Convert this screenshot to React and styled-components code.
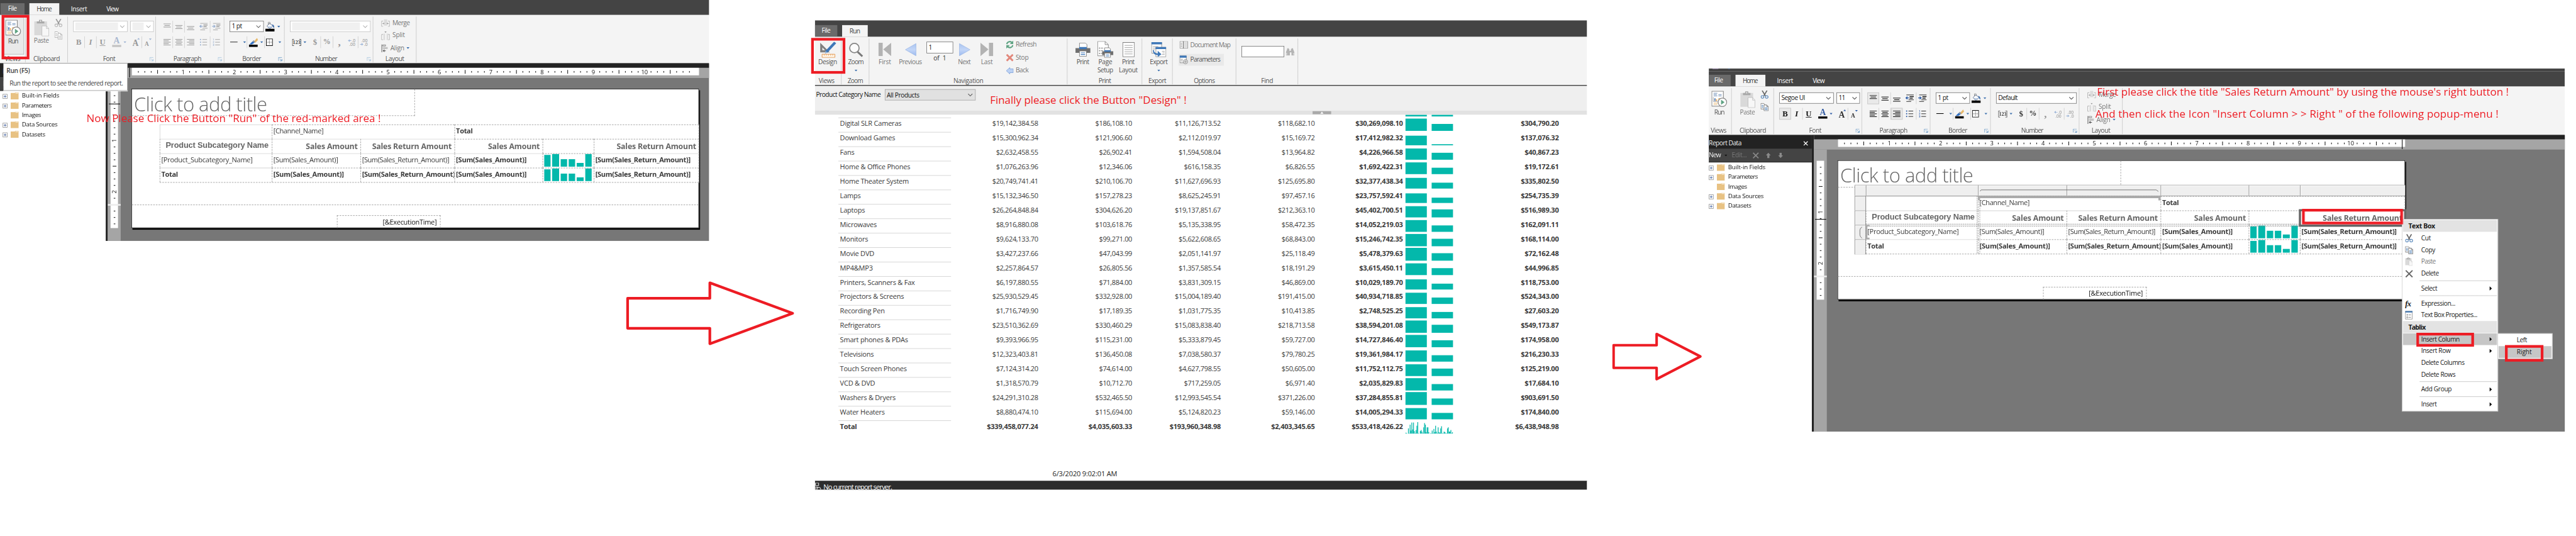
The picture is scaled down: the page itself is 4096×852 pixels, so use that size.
import React, { useLayoutEffect, useRef } from "react";
import styled, { createGlobalStyle, css } from "styled-components";

const SCALE = 4096 / 4824;
const RED = "#ed1c24";
const TEAL = "#03b8ab";

const Global = createGlobalStyle`
  body { margin: 0; background: #fff; overflow: hidden; font-family: "Open Sans", "Noto Sans", sans-serif; }
  * { box-sizing: border-box; }
  svg { display: block; flex: none; }
`;

/* ---------- text ---------- */
const Text = styled.span`
  display: inline-block;
  white-space: pre;
  line-height: 1.2;
  font-size: ${(p) => p.$size || 12}px;
  font-weight: ${(p) => p.$weight || 400};
  color: ${(p) => p.$color || "inherit"};
  font-family: ${(p) => p.$family || "inherit"};
`;

/* Text tracked so that it fills a given width. */
function Fit({ w, size, weight, color, family, children }) {
  const ref = useRef(null);
  useLayoutEffect(() => {
    const el = ref.current;
    el.style.letterSpacing = "0px";
    const natural = el.getBoundingClientRect().width / SCALE;
    const n = Math.max(1, el.textContent.length);
    const spacing = (w - natural) / n;
    el.style.letterSpacing = spacing + "px";
    el.style.marginRight = -spacing + "px";
  }, [w, children]);
  return (
    <Text ref={ref} $size={size} $weight={weight} $color={color} $family={family}>
      {children}
    </Text>
  );
}

/* ---------- board ---------- */
const Viewport = styled.div`
  width: 4096px;
  height: 852px;
  overflow: hidden;
  background: #fff;
`;
const Board = styled.main`
  width: 4824px;
  height: 1004px;
  display: flex;
  align-items: flex-start;
  transform: scale(${SCALE});
  transform-origin: 0 0;
`;
const FirstStep = styled.section`
  width: 1490px;
  display: flex;
  flex-direction: column;
`;
const SecondStep = styled.section`
  width: 1446px;
  margin: 38px 0 0 36px;
`;
const ThirdStep = styled.section`
  margin: 128px 0 0 13px;
`;
const FirstArrow = styled.svg`
  margin: 73px 0 0 1170px;
`;
const SecondArrow = styled.svg`
  margin: 620px 0 0 47px;
`;

const Note = styled.div`
  position: absolute;
  z-index: 5;
  left: ${(p) => p.$x}px;
  top: ${(p) => p.$y}px;
  display: flex;
  color: ${RED};
`;
const Mark = styled.div`
  position: absolute;
  z-index: 6;
  left: ${(p) => p.$x}px;
  top: ${(p) => p.$y}px;
  width: ${(p) => p.$w}px;
  height: ${(p) => p.$h}px;
  border: 5px solid ${RED};
`;

/* ---------- window frame ---------- */
const Frame = styled.div`
  position: relative;
  width: ${(p) => p.$w}px;
  height: ${(p) => p.$h}px;
`;
const Clip = styled.div`
  width: 100%;
  height: 100%;
  overflow: hidden;
  display: flex;
  flex-direction: column;
`;
const Shifted = styled.div`
  flex: 1;
  min-height: 0;
  display: flex;
  flex-direction: column;
  margin-left: ${(p) => -(p.$x || 0)}px;
`;
const TitleStrip = styled.div`
  height: 6px;
  background: #444;
  display: flex;
  padding-left: 7px;
  gap: 18px;
`;
const TitleSpeck = styled.i`
  width: ${(p) => p.$w}px;
  height: 1px;
  background: ${(p) => p.$c};
`;
const TabBar = styled.div`
  height: ${(p) => p.$h || 28}px;
  flex: none;
  background: #444;
  display: flex;
  align-items: flex-end;
  padding-left: ${(p) => p.$pad || 0}px;
  color: #fff;
`;
const Tab = styled.div`
  width: ${(p) => p.$w}px;
  height: 22px;
  margin-left: ${(p) => p.$gap || 0}px;
  display: flex;
  align-items: center;
  justify-content: center;
  ${(p) => p.$kind === "file" && css`background: #6a6a6a; height: 21px; margin-bottom: 1px;`}
  ${(p) => p.$kind === "on" && css`background: #f4f4f4; color: #444;`}
`;
const Ribbon = styled.div`
  height: 90px;
  flex: none;
  background: #f4f4f4;
  display: flex;
  color: #555;
`;
const Group = styled.div`
  width: ${(p) => p.$w}px;
  flex: none;
  height: 90px;
  display: flex;
  flex-direction: column;
  background: linear-gradient(#c8c8c8, #c8c8c8) right 3px / 1px 86px no-repeat;
  background-position: right 0 top 3px;
`;
const GroupBody = styled.div`
  height: 74px;
  flex: none;
  display: flex;
  flex-direction: ${(p) => (p.$col ? "column" : "row")};
  padding: ${(p) => p.$pad || "11px 0 0 10px"};
  gap: ${(p) => p.$gap || 0}px;
`;
const GroupLabel = styled.div`
  height: 16px;
  display: flex;
  align-items: center;
  justify-content: center;
  position: relative;
  color: #555;
  padding-right: ${(p) => p.$shift || 0}px;
`;
const Launcher = styled.svg`
  position: absolute;
  right: 4px;
  top: 5px;
`;
const Row = styled.div`
  display: flex;
  align-items: center;
  height: ${(p) => p.$h || 22}px;
  gap: ${(p) => p.$gap || 0}px;
`;
const Cell = styled.div`
  width: ${(p) => p.$w}px;
  height: 22px;
  flex: none;
  display: flex;
  align-items: center;
  justify-content: center;
  gap: 4px;
  ${(p) => p.$sep && css`border-right: 1px solid #cfcfcf;`}
  ${(p) => p.$on && css`background: #e9e9e9; border: 1px solid #c4c4c4;`}
`;
const Combo = styled.div`
  width: ${(p) => p.$w}px;
  height: 21px;
  background: #fff;
  border: 1px solid ${(p) => (p.$off ? "#c6c6c6" : "#7a7a7a")};
  display: flex;
  align-items: center;
  justify-content: space-between;
  padding: 0 4px 0 3px;
  color: #111;
`;
const Blank = styled.i`
  width: ${(p) => p.$w}px;
  height: 15px;
  background: #f0f0f0;
`;
const BigButton = styled.div`
  width: ${(p) => p.$w}px;
  margin-left: ${(p) => p.$ml || 0}px;
  flex: none;
  display: flex;
  flex-direction: column;
  align-items: center;
  ${(p) => p.$hot && css`background: #e9e9e9; border: 1px solid #bdbdbd; border-top-color: #ddd;`}
`;
const IconBox = styled.div`
  height: ${(p) => p.$h || 31}px;
  display: flex;
  align-items: center;
`;
const TextLine = styled.div`
  height: ${(p) => p.$h || 15}px;
  display: flex;
  align-items: center;
  justify-content: ${(p) => (p.$left ? "flex-start" : "center")};
  gap: ${(p) => p.$gap || 0}px;
`;
const Serif = styled.span`
  font-family: "Liberation Serif", serif;
  font-weight: 700;
  font-size: ${(p) => p.$s || 14}px;
  line-height: 1;
  font-style: ${(p) => (p.$i ? "italic" : "normal")};
  text-decoration: ${(p) => (p.$u ? "underline" : "none")};
  color: ${(p) => p.$c};
`;
const FontColor = styled.span`
  width: 17px;
  height: 18px;
  border-bottom: 4px solid ${(p) => p.$bar};
  display: flex;
  align-items: flex-end;
  justify-content: center;
`;

/* ---------- icons ---------- */
const Chevron = ({ c = "#555" }) => (
  <svg width="10" height="6" viewBox="0 0 10 6"><path d="M1 .7l4 4 4-4" fill="none" stroke={c} strokeWidth="1.2" /></svg>
);
const Drop = ({ c = "#3b6fae" }) => (
  <svg width="6" height="4" viewBox="0 0 6 4"><path d="M.3.3h5.4L3 3.6z" fill={c} /></svg>
);
const LaunchIcon = ({ c }) => (
  <Launcher width="8" height="8" viewBox="0 0 8 8"><path d="M.5 7V.5H7M3 3l3.5 3.5M7 3.5V7H3.5" fill="none" stroke={c} /></Launcher>
);
const Lines = ({ w = 14, h = 12, rows, c }) => (
  <svg width={w} height={h} viewBox={`0 0 ${w} ${h}`}>
    {rows.map(([x, y, len], i) => <rect key={i} x={x} y={y} width={len} height="1.2" fill={c} />)}
  </svg>
);
const LEFT = [[0, 0, 14], [0, 2.7, 10], [0, 5.4, 14], [0, 8.1, 10], [0, 10.8, 14]];
const CENTER = [[0, 0, 14], [2, 2.7, 10], [0, 5.4, 14], [2, 8.1, 10], [0, 10.8, 14]];
const RIGHT = [[0, 0, 14], [4, 2.7, 10], [0, 5.4, 14], [4, 8.1, 10], [0, 10.8, 14]];
const tri = (y) => [[0, y, 14], [2, y + 3, 10], [0, y + 6, 14]];

const Indent = ({ c, blue, right }) => (
  <svg width="16" height="14" viewBox="0 0 16 14">
    <g fill={c}><rect x="2" y="0" width="14" height="1.2" /><rect x="8" y="3" width="8" height="1.6" /><rect x="8" y="6" width="6" height="1.6" /><rect x="6" y="9.4" width="10" height="1" /><rect x="2" y="12.4" width="9" height="1" /></g>
    <path d={right ? "M0 5.5h3V3l4 3.3-4 3.3V7H0z" : "M7 5.5H4V3L0 6.3l4 3.3V7h3z"} fill={blue} />
  </svg>
);
const Bullets = ({ c, blue, num }) => (
  <svg width="14" height="14" viewBox="0 0 14 14">
    <g fill={c}><rect x="5" y="1.5" width="9" height="1" /><rect x="5" y="6.5" width="9" height="1" /><rect x="5" y="11.5" width="9" height="1" /></g>
    {num
      ? <path d="M1 .5h1v3M.8 5.5h1.7v1L1 8h1.8M.8 10.5h1.7v3H.8M1 12h1.5" fill="none" stroke={blue} strokeWidth=".8" />
      : <g fill={blue}><circle cx="1.5" cy="2" r="1.3" /><circle cx="1.5" cy="7" r="1.3" /><circle cx="1.5" cy="12" r="1.3" /></g>}
  </svg>
);
const RunIcon = () => (
  <svg width="30" height="32" viewBox="0 0 30 32">
    <path d="M.7.7h21.6v28H.7z" fill="#fff" stroke="#7f7f7f" strokeWidth="1.2" />
    <path d="M4 4.5h7M4 7h6M13 7h6M4 9.500h7M13 9.500h6" stroke="#5b7fae" strokeWidth="1" />
    <path d="M3.500 12v8h8" fill="none" stroke="#999" /><path d="M5.500 14h2v5h-2z" fill="#3f6fae" /><path d="M8.500 16h2v3h-2z" fill="#e79a3c" />
    <path d="M13 14a4.500 4.500 0 0 1 5 2l-5 3z" fill="#e9b265" /><path d="M4 23h9M4 25.500h7" stroke="#e9b265" />
    <circle cx="20.500" cy="21.500" r="8" fill="#fff" stroke="#8a8a8a" strokeWidth="1.500" />
    <path d="M18 16.800l6.500 4.700-6.500 4.700z" fill="#5fa383" />
  </svg>
);
const PasteIcon = ({ s = 1 }) => (
  <svg width={28 * s} height={31 * s} viewBox="0 0 28 31">
    <path d="M0 3h24v26H0z" fill="#d9d9d9" /><path d="M5 7V3h4V1.500a3 3 0 0 1 6 0V3h4v4z" fill="#a9a9a9" /><circle cx="12" cy="2.600" r="1.200" fill="#f4f4f4" />
    <path d="M14.500 11.500H23l4.500 5v14h-13z" fill="#f7f7f7" stroke="#bdbdbd" /><path d="M23 11.500v5h4.500" fill="none" stroke="#bdbdbd" />
  </svg>
);
const CutIcon = ({ on }) => (
  <svg width="15" height="16" viewBox="0 0 15 16">
    <path d="M3 .5l6 10M12 .5L6 10.500" stroke={on ? "#666" : "#9b9b9b"} strokeWidth="2" />
    <circle cx="3.400" cy="12.500" r="2.600" fill="none" stroke={on ? "#4a7db5" : "#b5b5b5"} strokeWidth="1.200" /><circle cx="11.400" cy="12.500" r="2.600" fill="none" stroke={on ? "#4a7db5" : "#b5b5b5"} strokeWidth="1.200" />
  </svg>
);
const CopyIcon = ({ on }) => {
  const g = on ? "#6d6d6d" : "#aaa";
  const b = on ? "#4a7db5" : "#b9b9b9";
  return (
    <svg width="15" height="15" viewBox="0 0 15 15">
      <path d="M.5.5h5l3 2.500v8h-8z" fill="#fff" stroke={g} /><path d="M2 4h3M2 6h3M2 8h3" stroke={b} />
      <path d="M6.500 3.500h5l3 3v8h-8z" fill="#fff" stroke={g} /><path d="M11.500 3.500v3h3" fill="none" stroke={g} /><path d="M8 8.500h5M8 10.500h5M8 12.500h5" stroke={b} />
    </svg>
  );
};
const BucketIcon = () => (
  <svg width="18" height="18" viewBox="0 0 18 18">
    <path d="M3 8l5-6 6 6-6 5z" fill="#fff" stroke="#5a6f96" strokeWidth="1.100" /><path d="M5.500 5V1.500A1.500 1.500 0 0 1 8.500 1v4" fill="none" stroke="#777" />
    <path d="M12 5c3-.5 5 2 4.500 6.500-1.500-1-2.500-2.500-2.800-4z" fill="#3f6fae" /><path d="M4 8.500h9L8 12.500z" fill="#b9cbe4" /><path d="M0 13h17v5H0z" fill="#000" />
  </svg>
);
const PenIcon = () => (
  <svg width="17" height="17" viewBox="0 0 17 17">
    <path d="M15.500 0L17 4l-5 5-3-2z" fill="#e7b869" /><path d="M9 4l3 4-3 2-3-2z" fill="#8a97a8" /><path d="M7 6.500l3 3-4 2.500H1z" fill="#2f6fc4" /><path d="M0 12.500h16.500V17H0z" fill="#000" />
  </svg>
);
const BorderIcon = () => (
  <svg width="13" height="14" viewBox="0 0 13 14"><path d="M.7.7h11.600v12.600H.7z" fill="#fff" stroke="#111" strokeWidth="1.200" /><path d="M6.500 2v10M2 7h9" stroke="#555" strokeDasharray="1.500 1" /></svg>
);
const NumberIcon = () => (
  <svg width="17" height="13" viewBox="0 0 17 13"><path d="M3.500.6H.6v11.800h2.900M13.500.6h2.900v11.800h-2.900" fill="none" stroke="#555" strokeWidth="1.200" /><text x="8.500" y="10" textAnchor="middle" fontFamily="Liberation Serif, serif" fontWeight="700" fontSize="9.500" fill="#444">123</text></svg>
);
const DecimalIcon = ({ up }) => (
  <svg width="16" height="15" viewBox="0 0 16 15">
    <g fontFamily="Open Sans, sans-serif" fontSize="8" fill="#888"><text x={up ? 8 : 3} y="7">{up ? ".0" : ".00"}</text><text x={up ? 3 : 8} y="14">{up ? ".00" : ".0"}</text></g>
    <path d={up ? "M7 3.500H4V1.500L.5 4 4 6.500v-2h3z" : "M0 10.500h3v-2L6.500 11 3 13.500v-2H0z"} fill="#9db5d8" />
  </svg>
);
const MergeIcon = () => (
  <svg width="16" height="14" viewBox="0 0 16 14"><path d="M3.500 3.500h-3v10h3M12.500 3.500h3v10h-3" fill="none" stroke="#aaa" /><path d="M5 0h6v12H5z" fill="#dcdcdc" /><path d="M2 8h3M14 8h-3" stroke="#999" /><path d="M4 6l2 2-2 2zM12 6l-2 2 2 2z" fill="#999" /></svg>
);
const SplitIcon = () => (
  <svg width="16" height="16" viewBox="0 0 16 16"><path d="M3.500 5.500h-3v10h3M12.500 5.500h3v10h-3" fill="none" stroke="#aaa" /><path d="M4 4h3v12H4zM10 4h3v12h-3z" fill="#dcdcdc" /><path d="M6 0h4L8 2.500z" fill="#999" /></svg>
);
const AlignIcon = () => (
  <svg width="13" height="15" viewBox="0 0 13 15"><path d="M1 0v15" stroke="#555" strokeWidth="1.200" /><path d="M3 .8h5v2.400H3z" fill="none" stroke="#777" /><path d="M3 5h9v4H3z" fill="#c4c4c4" /><path d="M8.500 12H4M6 10l-2.400 2L6 14" fill="none" stroke="#555" strokeWidth="1.200" /></svg>
);
const XIcon = ({ s = 12, c = "#666", w = 2 }) => (
  <svg width={s} height={s} viewBox="0 0 12 12"><path d="M1 1l10 10M11 1L1 11" stroke={c} strokeWidth={w} /></svg>
);

/* ---------- designer window ---------- */
const Workspace = styled.div`
  flex: 1;
  min-height: 0;
  display: flex;
  border-top: 1px solid #4a4a4a;
`;
const Side = styled.aside`
  width: 198px;
  flex: none;
  background: #fff;
  color: #111;
`;
const SideHead = styled.div`
  height: 26px;
  background: #222;
  color: #eee;
  display: flex;
  align-items: center;
  justify-content: space-between;
  padding: 5px 7px 0 5px;
`;
const SideTools = styled.div`
  height: 25px;
  background: #444;
  border-bottom: 1px solid #222;
  display: flex;
  align-items: center;
  padding-left: 5px;
  color: #eee;
`;
const Gap = styled.i`
  width: ${(p) => p.$w}px;
  flex: none;
`;
const Tree = styled.ul`
  list-style: none;
  margin: 0;
  padding: 0 0 0 5px;
`;
const TreeItem = styled.li`
  height: 18px;
  display: flex;
  align-items: center;
  gap: 6px;
`;
const Plus = styled.i`
  width: 9px;
  height: 9px;
  margin-top: 3px;
  border: 1px solid ${(p) => (p.$none ? "transparent" : "#999")};
  background: ${(p) => (p.$none ? "none" : "linear-gradient(#3a5a9a,#3a5a9a) center / 5px 1px no-repeat, linear-gradient(#3a5a9a,#3a5a9a) center / 1px 5px no-repeat")};
`;
const Folder = () => (
  <svg width="15" height="13" viewBox="0 0 15 13"><path d="M0 1h8V0h7v13H0z" fill="#e8c283" /><path d="M9 1.500h5" stroke="#fff" strokeWidth="1" /></svg>
);
const Splitter = styled.div`
  width: 4px;
  flex: none;
  background: linear-gradient(90deg, #222 0 3px, #666 3px 4px);
`;
const DesignArea = styled.div`
  flex: 1;
  min-width: 0;
  display: flex;
  flex-direction: column;
  background: #777;
  border-top: 8px solid #222;
`;
const RulerRow = styled.div`
  height: 19px;
  flex: none;
  background: #a5a5a5;
  padding-left: 45px;
`;
const CanvasRow = styled.div`
  flex: 1;
  display: flex;
  align-items: flex-start;
`;
const RulerCol = styled.div`
  width: 24px;
  align-self: stretch;
  background: #a5a5a5;
  padding: 21px 0 0 5px;
`;
const RulerSvg = styled.svg`
  overflow: visible;
`;
const HRuler = ({ marker }) => (
  <RulerSvg width="1062" height="19" viewBox="0 0 1062 19">
    <rect width="1062" height="14" fill="#fff" />
    {Array.from({ length: 87 }, (_, i) => i + 1).map((k) =>
      k % 8 === 0 ? (
        <text key={k} x={k * 12} y="11.500" textAnchor="middle" fontSize="11" fontFamily="Open Sans, sans-serif" fill="#111">{k / 8}</text>
      ) : (
        <rect key={k} x={k * 12 - 0.5} y={k % 8 === 4 ? 4 : 6} width="1.2" height={k % 8 === 4 ? 7 : 3} fill="#111" />
      )
    )}
    <rect x={marker} y="0" width="1.2" height="18" fill="#000" />
  </RulerSvg>
);
const VRuler = ({ marker }) => (
  <RulerSvg width="14" height="260" viewBox="0 0 14 260">
    <rect width="14" height="260" fill="#fff" />
    {Array.from({ length: 21 }, (_, i) => i + 1).filter((k) => k !== 18).map((k) =>
      k === 8 || k === 16 ? (
        <text key={k} transform={`translate(11 ${k * 12}) rotate(-90)`} textAnchor="middle" fontSize="11" fontFamily="Open Sans, sans-serif" fill="#111">{k / 8}</text>
      ) : (
        <rect key={k} x={k === 4 || k === 12 ? 4 : 6} y={k * 12 - 0.5} width={k === 4 || k === 12 ? 7 : 3} height="1.2" fill="#111" />
      )
    )}
    <rect x="-5" y="215" width="24" height="3" fill="#ececec" />
    <rect x="-3" y={marker} width="21" height="1.2" fill="#000" />
  </RulerSvg>
);
const Page = styled.div`
  width: 1063px;
  height: 261px;
  flex: none;
  margin: 20px 0 0 20px;
  background: #fff;
  border: 1px solid #000;
  box-shadow: 2px 3px 0 #000;
`;
const PageBody = styled.div`
  height: 217px;
  border-bottom: 1px dashed #999;
`;
const TitleBox = styled.div`
  width: 530px;
  height: 50px;
  border-right: 1px dashed #999;
  border-bottom: 1px dashed #999;
  display: flex;
  align-items: center;
  padding: 7px 0 0 4px;
`;
const Exec = styled.div`
  width: 194px;
  height: 24px;
  margin: 19px 0 0 384px;
  border: 1px dashed #999;
  border-bottom: 0;
  display: flex;
  align-items: center;
  justify-content: flex-end;
  padding-right: 6px;
  color: #111;
`;
const Tablix = styled.div`
  position: relative;
  width: 1010px;
  height: 109px;
  margin: 16px 0 0 52px;
  display: grid;
  grid-template-columns: 210px 166px 176px 165px 96px 197px;
  grid-template-rows: repeat(4, 27px);
  background: #fff;
  border-right: 1px dashed #999;
  border-bottom: 1px dashed #999;
`;
const TCell = styled.div`
  grid-column: span ${(p) => p.$span || 1};
  min-width: 0;
  overflow: hidden;
  display: flex;
  align-items: center;
  justify-content: ${(p) => (p.$right ? "flex-end" : "flex-start")};
  padding: ${(p) => (p.$right ? "0 5px 1px 0" : "0 0 3px 2px")};
  border-left: 1px ${(p) => (p.$ls ? "solid #d3d3d3" : "dashed #999")};
  border-top: 1px ${(p) => (p.$ts ? "solid #d3d3d3" : "dashed #999")};
  color: #3a3a3a;
`;
const HeadCell = styled(TCell)`
  padding: 0 6px 4px 0;
`;
const Spark = () => (
  <svg width="94" height="26" viewBox="0 0 94 26">
    {[[0, 12, 2], [15, 13, 0], [31, 12, 10], [46, 12, 10], [61, 13, 17], [77, 12, 0]].map(([x, w, y]) => (
      <rect key={x} x={x} y={y} width={w} height={24 - y} fill={TEAL} />
    ))}
  </svg>
);
const SparkCell = styled(TCell)`
  padding: 0 0 0 2px;
`;
const Handles = styled.div`
  position: absolute;
  left: -21px;
  top: -21px;
  width: 1031px;
  height: 21px;
  display: grid;
  grid-template-columns: 21px 210px 166px 176px 165px 96px 197px;
  border-top: 1px solid #8f8f8f;
  border-right: 1px solid #8f8f8f;
  border-bottom: 1px solid #777;
`;
const RowHandles = styled.div`
  position: absolute;
  left: -21px;
  top: 0;
  width: 21px;
  height: 109px;
  display: grid;
  grid-template-rows: 27px 27px 27px 28px;
  border-right: 1px solid #777;
  border-bottom: 1px solid #777;
`;
const Handle = styled.div`
  background: #efefef;
  border-left: 1px solid #8f8f8f;
  border-top: ${(p) => (p.$row ? "1px solid #a5a5a5" : "0")};
  box-shadow: inset 1px 1px 0 #fff;
`;
const Overlay = styled.svg`
  position: absolute;
  left: -21px;
  top: -21px;
  overflow: visible;
`;

const Bold = (p) => <Fit weight={700} {...p} />;

function Designer({ active }) {
  const ink = active ? "#111" : "#999";
  const blue = active ? "#2f5ea8" : "#9db3d3";
  const launch = active ? "#5a8fc0" : "#9dc0dd";
  const chev = active ? "#555" : "#aaa";
  return (
    <>
      <TabBar $pad={1}>
        <Tab $w={45} $kind="file"><Fit w={16}>File</Fit></Tab>
        <Tab $w={56} $gap={9} $kind="on"><Fit w={27}>Home</Fit></Tab>
        <Tab $w={74}><Fit w={30}>Insert</Fit></Tab>
        <Tab $w={52}><Fit w={22}>View</Fit></Tab>
      </TabBar>
      <Ribbon>
        <Group $w={48}>
          <GroupBody $pad="5px 0 0 5px">
            <BigButton $w={40} $hot={!active}>
              <IconBox $h={37}><RunIcon /></IconBox>
              <TextLine $h={12}><Fit w={18.500}>Run</Fit></TextLine>
            </BigButton>
          </GroupBody>
          <GroupLabel $shift={1}><Fit w={29}>Views</Fit></GroupLabel>
        </Group>
        <Group $w={79}>
          <GroupBody $pad="7px 0 0 12px">
            <BigButton $w={35}>
              <IconBox $h={34}><PasteIcon /></IconBox>
              <TextLine $h={14}><Fit w={28} color="#777">Paste</Fit></TextLine>
            </BigButton>
            <BigButton $w={15} $ml={7}>
              <IconBox $h={16}><CutIcon on={active} /></IconBox>
              <IconBox $h={30}><CopyIcon on={active} /></IconBox>
            </BigButton>
          </GroupBody>
          <GroupLabel><Fit w={49.500}>Clipboard</Fit></GroupLabel>
        </Group>
        <Group $w={165}>
          <GroupBody $col $gap={8}>
            <Row $h={21} $gap={5}>
              <Combo $w={102} $off={!active}>
                {active ? <Fit w={44}>Segoe UI</Fit> : <Blank $w={80} />}<Chevron c={chev} />
              </Combo>
              <Combo $w={44} $off={!active}>
                {active ? <Fit w={12}>11</Fit> : <Blank $w={21} />}<Chevron c={chev} />
              </Combo>
            </Row>
            <Row>
              <Cell $w={22} $sep $on={active}><Serif $s={15} $c={ink}>B</Serif></Cell>
              <Cell $w={22} $sep><Serif $s={15} $i $c={ink}>I</Serif></Cell>
              <Cell $w={22}><Serif $s={15} $u $c={ink}>U</Serif></Cell>
              <Cell $w={41}>
                <FontColor $bar={active ? "#000" : "#c4c4c4"}><Serif $s={16} $c={active ? "#3b62a5" : "#a9b8cf"}>A</Serif></FontColor>
                <Drop c={blue} />
              </Cell>
              <Cell $w={22} $sep>
                <svg width="14" height="17" viewBox="0 0 14 17"><text x="0" y="15" fontFamily="Liberation Serif, serif" fontWeight="700" fontSize="16" fill={active ? "#333" : "#999"}>A</text><path d="M9 3l2.500-3L14 3z" fill={blue} /></svg>
              </Cell>
              <Cell $w={22}>
                <svg width="13" height="17" viewBox="0 0 13 17"><text x="0" y="15" fontFamily="Liberation Serif, serif" fontWeight="700" fontSize="11" fill={active ? "#333" : "#999"}>A</text><path d="M8 1h5l-2.500 3z" fill={blue} /></svg>
              </Cell>
            </Row>
          </GroupBody>
          <GroupLabel $shift={10}><Fit w={23}>Font</Fit><LaunchIcon c={launch} /></GroupLabel>
        </Group>
        <Group $w={128}>
          <GroupBody $col $gap={8}>
            <Row $h={21}>
              <Cell $w={22} $sep $on={active}><Lines rows={tri(0)} c={ink} /></Cell>
              <Cell $w={22} $sep><Lines rows={tri(3)} c={ink} /></Cell>
              <Cell $w={22}><Lines rows={tri(6)} c={ink} h={14} /></Cell>
              <Cell $w={26} $sep><Indent c={ink} blue={blue} /></Cell>
              <Cell $w={22}><Indent c={ink} blue={blue} right /></Cell>
            </Row>
            <Row>
              <Cell $w={22} $sep><Lines rows={LEFT} c={ink} /></Cell>
              <Cell $w={22} $sep><Lines rows={CENTER} c={ink} /></Cell>
              <Cell $w={22} $on={active}><Lines rows={RIGHT} c={ink} /></Cell>
              <Cell $w={26} $sep><Bullets c={ink} blue={blue} /></Cell>
              <Cell $w={22}><Bullets c={ink} blue={blue} num /></Cell>
            </Row>
          </GroupBody>
          <GroupLabel $shift={10}><Fit w={52}>Paragraph</Fit><LaunchIcon c={launch} /></GroupLabel>
        </Group>
        <Group $w={113}>
          <GroupBody $col $gap={8}>
            <Row $h={21} $gap={3}>
              <Combo $w={64}><Fit w={19}>1 pt</Fit><Chevron /></Combo>
              <Cell $w={28}><BucketIcon /><Drop /></Cell>
            </Row>
            <Row>
              <Cell $w={33} $sep><Lines w={14} h={2} rows={[[0, 0, 14]]} c="#000" /><Gap $w={2} /><Drop /></Cell>
              <Cell $w={33} $sep><PenIcon /><Drop /></Cell>
              <Cell $w={32}><BorderIcon /><Gap $w={2} /><Drop /></Cell>
            </Row>
          </GroupBody>
          <GroupLabel $shift={10}><Fit w={35}>Border</Fit><LaunchIcon c="#5a8fc0" /></GroupLabel>
        </Group>
        <Group $w={166}>
          <GroupBody $col $gap={8}>
            <Row $h={21}>
              <Combo $w={151} $off={!active}>
                {active ? <Fit w={36}>Default</Fit> : <Blank $w={127} />}<Chevron c={chev} />
              </Combo>
            </Row>
            <Row>
              <Cell $w={34}><NumberIcon /><Drop /></Cell>
              <Gap $w={3} />
              <Cell $w={21} $sep><Serif $s={15} $c={active ? "#333" : "#999"}>$</Serif></Cell>
              <Cell $w={23} $sep><Serif $s={14} $c={active ? "#333" : "#999"}>%</Serif></Cell>
              <Cell $w={23}><Serif $s={20} $c="#999">,</Serif></Cell>
              <Cell $w={24} $sep><DecimalIcon up /></Cell>
              <Cell $w={22}><DecimalIcon /></Cell>
            </Row>
          </GroupBody>
          <GroupLabel $shift={10}><Fit w={41}>Number</Fit><LaunchIcon c={launch} /></GroupLabel>
        </Group>
        <Group $w={81}>
          <GroupBody $col $pad="3px 0 0 15px">
            <TextLine $left $h={24} $gap={5}><MergeIcon /><Fit w={32} color="#777">Merge</Fit></TextLine>
            <TextLine $left $h={24} $gap={5}><SplitIcon /><Fit w={23} color="#777">Split</Fit></TextLine>
            <TextLine $left $h={24} $gap={4}><AlignIcon /><Fit w={26} color="#777">Align</Fit><Drop /></TextLine>
          </GroupBody>
          <GroupLabel><Fit w={35}>Layout</Fit></GroupLabel>
        </Group>
      </Ribbon>
      <Workspace>
        <Side>
          <SideHead><Fit w={61}>Report Data</Fit><XIcon s={9} c="#fff" /></SideHead>
          <SideTools>
            <Fit w={22}>New</Fit><Gap $w={6} /><Drop c="#111" /><Gap $w={8} />
            <Fit w={28} color="#777">Edit...</Fit><Gap $w={11} /><XIcon s={12} c="#888" /><Gap $w={13} />
            <svg width="32" height="11" viewBox="0 0 32 11"><path d="M4.500 0L9 5H6.500v5h-4V5H0zM27.500 10L32 5h-2.500V0h-4v5H23z" fill="#8a8a8a" /></svg>
          </SideTools>
          <Tree>
            {[["Built-in Fields", 70], ["Parameters", 55.500], ["Images", 35.500], ["Data Sources", 66.500], ["Datasets", 43.500]].map(([t, w]) => (
              <TreeItem key={t}><Plus $none={t === "Images"} /><Folder /><Fit w={w} size={11.500}>{t}</Fit></TreeItem>
            ))}
          </Tree>
        </Side>
        <Splitter />
        <DesignArea>
          <RulerRow><HRuler marker={active ? 1056 : -5} /></RulerRow>
          <CanvasRow>
            <RulerCol><VRuler marker={active ? 109 : 27} /></RulerCol>
            <Page>
              <PageBody>
                <TitleBox><Fit w={249} size={36.500} weight={300} color="#666">Click to add title</Fit></TitleBox>
                <Tablix>
                  <TCell $ls $ts />
                  <TCell $span={2}><Fit w={93.500} size={13}>[Channel_Name]</Fit></TCell>
                  <TCell $span={3}><Bold w={31} size={13}>Total</Bold></TCell>

                  <HeadCell $ts $right><Bold w={192.500} size={15} color="#666" family='"Liberation Sans", sans-serif'>Product Subcategory Name</Bold></HeadCell>
                  <TCell $ts $right><Bold w={97} size={14.500} color="#666">Sales Amount</Bold></TCell>
                  <TCell $ts $right><Bold w={149} size={14.500} color="#666">Sales Return Amount</Bold></TCell>
                  <TCell $right><Bold w={97} size={14.500} color="#666">Sales Amount</Bold></TCell>
                  <TCell />
                  <TCell $right><Bold w={149} size={14.500} color="#666">Sales Return Amount</Bold></TCell>

                  <TCell $ts><Fit w={171} size={13}>[Product_Subcategory_Name]</Fit></TCell>
                  <TCell $ts><Fit w={121} size={13}>[Sum(Sales_Amount)]</Fit></TCell>
                  <TCell $ts><Fit w={163} size={13}>[Sum(Sales_Return_Amount)]</Fit></TCell>
                  <TCell $ts><Bold w={132} size={13}>[Sum(Sales_Amount)]</Bold></TCell>
                  <SparkCell><Spark /></SparkCell>
                  <TCell $ts><Bold w={178} size={13}>[Sum(Sales_Return_Amount)]</Bold></TCell>

                  <TCell $ts><Bold w={31} size={13}>Total</Bold></TCell>
                  <TCell><Bold w={132} size={13}>[Sum(Sales_Amount)]</Bold></TCell>
                  <TCell><Bold w={178} size={13}>[Sum(Sales_Return_Amount)]</Bold></TCell>
                  <TCell><Bold w={132} size={13}>[Sum(Sales_Amount)]</Bold></TCell>
                  <SparkCell><Spark /></SparkCell>
                  <TCell><Bold w={178} size={13}>[Sum(Sales_Return_Amount)]</Bold></TCell>
                  {active && (
                    <>
                      <Handles>{[0, 1, 2, 3, 4, 5, 6].map((i) => <Handle key={i} />)}</Handles>
                      <RowHandles>{[0, 1, 2, 3].map((i) => <Handle key={i} $row />)}</RowHandles>
                      <Overlay width="1034" height="130" viewBox="0 0 1034 130">
                        <path d="M235 12l2-2.500h328l4 3M14 79q-4 2-4 6v9q0 3 4 6" fill="none" stroke="#666" />
                        <path d="M231 21h342v8h-4v-4H235v4h-4z" fill="#ababab" />
                        <path d="M21 75h7v3h-4v21h4v3h-7z" fill="#ababab" />
                        <path d="M229.500 21v108M234.500 29v100M21 73.500h810M28 77.500h804" fill="none" stroke="#888" strokeDasharray="2 1.500" />
                        <path d="M834 47.500h197v29H834z" fill="none" stroke="#666" strokeWidth="4" />
                      </Overlay>
                    </>
                  )}
                </Tablix>
              </PageBody>
              <Exec><Fit w={101} size={13}>[&amp;ExecutionTime]</Fit></Exec>
            </Page>
          </CanvasRow>
        </DesignArea>
      </Workspace>
    </>
  );
}

const Tooltip = styled.div`
  position: absolute;
  z-index: 4;
  left: 6px;
  top: 118px;
  width: 233px;
  height: 52px;
  background: #fff;
  border: 1px solid #9a9a9a;
  display: flex;
  flex-direction: column;
  align-items: flex-start;
  gap: 9px;
  padding: 7px 0 0 5px;
  color: #444;
`;
const TooltipBody = styled.div`
  padding-left: 6px;
  display: flex;
`;

/* ---------- context menu ---------- */
const Menu = styled.div`
  position: absolute;
  z-index: 5;
  left: ${(p) => p.$x}px;
  top: ${(p) => p.$y}px;
  width: ${(p) => p.$w}px;
  padding: 1px;
  background: #fff;
  border: 1px solid #c6c6c6;
  color: #1a1a1a;
`;
const MenuHead = styled.div`
  height: 22px;
  margin-bottom: 1px;
  padding-left: 10px;
  background: #e3e3e3;
  display: flex;
  align-items: center;
`;
const MenuItem = styled.div`
  height: 22px;
  display: grid;
  grid-template-columns: 34px 1fr 14px;
  align-items: center;
  background: ${(p) => (p.$on ? "#c6c6c6" : "none")};
  color: ${(p) => (p.$off ? "#777" : "inherit")};
`;
const MenuIcon = styled.span`
  padding-left: 4px;
`;
const MenuText = styled.span`
  display: flex;
`;
const MenuRule = styled.div`
  height: 6px;
  margin-left: 31px;
  background: linear-gradient(#c6c6c6, #c6c6c6) 0 2px / 100% 1px no-repeat;
`;
const Item = ({ icon, label, w, sub, on, off }) => (
  <MenuItem $on={on} $off={off}>
    <MenuIcon>{icon}</MenuIcon>
    <MenuText><Fit w={w}>{label}</Fit></MenuText>
    {sub && <svg width="5" height="8" viewBox="0 0 5 8"><path d="M0 0v8l4.500-4z" fill="#000" /></svg>}
  </MenuItem>
);
const PropsIcon = () => (
  <svg width="14" height="16" viewBox="0 0 14 16"><path d="M.5.5h13v15H.5z" fill="#fff" stroke="#777" /><path d="M0 0h14v3H0z" fill="#4a7db5" /><path d="M6.500 7.500H11M6.500 12H11" stroke="#777" /><circle cx="4" cy="7.500" r="1.200" fill="#777" /><circle cx="4" cy="12" r="1.200" fill="none" stroke="#777" /></svg>
);
const Fx = styled.span`
  display: block;
  font: italic 700 15px/1 "Liberation Serif", serif;
  letter-spacing: -1px;
`;

/* ---------- report viewer ---------- */
const ViewerBody = styled.div`
  flex: 1;
  min-height: 0;
  display: flex;
  flex-direction: column;
  border-top: 2px solid #4a4a4a;
`;
const Params = styled.div`
  height: 46px;
  flex: none;
  background: #efefef;
  display: flex;
  align-items: flex-start;
  padding: 6px 0 0 2px;
  gap: 7px;
  color: #111;
`;
const ParamLabel = styled.div`
  height: 21px;
  display: flex;
  align-items: center;
`;
const Select = styled.div`
  width: 170px;
  height: 21px;
  background: #e1e1e1;
  border: 1px solid #a9a9a9;
  display: flex;
  align-items: center;
  justify-content: space-between;
  padding: 1px 4px 0 3px;
`;
const CollapseStrip = styled.div`
  height: 8px;
  flex: none;
  background: #e2e2e2;
  padding: 1px 0 0 932px;
`;
const Report = styled.div`
  height: 685px;
  flex: none;
  background: #fff;
  display: flex;
  flex-direction: column;
`;
const ReportRow = styled.div`
  height: 27px;
  flex: none;
  display: grid;
  grid-template-columns: 44px 211px 163px 176px 166px 176px 165px 103px 189px;
  align-items: start;
  color: #3a3a3a;
`;
const TopSliver = styled(ReportRow)`
  height: 5px;
`;
const Name = styled.div`
  grid-column: 2;
  height: 27px;
  border-top: 1px solid #d0d0d0;
  padding: 1px 0 0 3px;
  font-size: 13px;
  line-height: 18px;
  letter-spacing: -0.28px;
  font-weight: ${(p) => (p.$bold ? 700 : 400)};
`;
const Amount = styled.div`
  height: 27px;
  padding-top: 2px;
  text-align: right;
  font-size: 13px;
  line-height: 18px;
  font-weight: ${(p) => (p.$bold ? 700 : 400)};
  letter-spacing: ${(p) => (p.$bold ? -0.3 : -0.43)}px;
`;
const BarCell = styled.div`
  height: ${(p) => p.$h || 25}px;
  padding-left: 5px;
  display: flex;
  align-items: flex-end;
  gap: 9px;
`;
const Bar = styled.i`
  width: 40px;
  background: ${TEAL};
`;
const RunDate = styled.div`
  margin-top: auto;
  height: 21px;
  padding-left: 445px;
  display: flex;
  align-items: flex-start;
  color: #222;
`;
const StatusBar = styled.div`
  height: 17px;
  flex: none;
  background: #2d2d2d;
  border-top: 1px solid #5c5c5c;
  display: flex;
  align-items: flex-start;
  gap: 4px;
  padding-top: 3px;
  color: #fff;
  overflow: hidden;
`;
const SmallItem = styled.div`
  height: 22px;
  display: flex;
  align-items: center;
  gap: 4px;
  padding-left: 2px;
  width: ${(p) => p.$w || "auto"};
  background: ${(p) => (p.$on ? "#e9e9e9" : "none")};
`;
const PageInput = styled.div`
  width: ${(p) => p.$w}px;
  height: ${(p) => p.$h || 22}px;
  background: #fff;
  border: 1px solid #777;
  color: #111;
  padding-left: 3px;
  display: flex;
  align-items: center;
`;
const NavBox = styled.div`
  width: 50px;
  margin-left: 5px;
  padding-top: 2px;
  display: flex;
  flex-direction: column;
  align-items: center;
  gap: 2px;
`;
const SmallStack = styled.div`
  margin-left: ${(p) => p.$ml}px;
  margin-top: ${(p) => p.$mt || 0}px;
  display: flex;
  flex-direction: column;
  gap: ${(p) => p.$gap}px;
`;
const FindRow = styled.div`
  display: flex;
  align-items: center;
  height: 21px;
  gap: 3px;
`;

const ROWS = [
  ["Digital SLR Cameras", "19,142,384.58", "186,108.10", "11,126,713.52", "118,682.10", "30,269,098.10", 23, 13, "304,790.20"],
  ["Download Games", "15,300,962.34", "121,906.60", "2,112,019.97", "15,169.72", "17,412,982.32", 18, 2, "137,076.32"],
  ["Fans", "2,632,458.55", "26,902.41", "1,594,508.04", "13,964.82", "4,226,966.58", 21, 13, "40,867.23"],
  ["Home & Office Phones", "1,076,263.96", "12,346.06", "616,158.35", "6,826.55", "1,692,422.31", 22, 12, "19,172.61"],
  ["Home Theater System", "20,749,741.41", "210,106.70", "11,627,696.93", "125,695.80", "32,377,438.34", 20, 11, "335,802.50"],
  ["Lamps", "15,132,346.50", "157,278.23", "8,625,245.91", "97,457.16", "23,757,592.41", 18, 10, "254,735.39"],
  ["Laptops", "26,264,848.84", "304,626.20", "19,137,851.67", "212,363.10", "45,402,700.51", 21, 15, "516,989.30"],
  ["Microwaves", "8,916,880.08", "103,618.76", "5,135,338.95", "58,472.35", "14,052,219.03", 22, 12, "162,091.11"],
  ["Monitors", "9,624,133.70", "99,271.00", "5,622,608.65", "68,843.00", "15,246,742.35", 23, 14, "168,114.00"],
  ["Movie DVD", "3,427,237.66", "47,043.99", "2,051,141.97", "25,118.49", "5,478,379.63", 24, 14, "72,162.48"],
  ["MP4&MP3", "2,257,864.57", "26,805.56", "1,357,585.54", "18,191.29", "3,615,450.11", 22, 13, "44,996.85"],
  ["Printers, Scanners & Fax", "6,197,880.55", "71,884.00", "3,831,309.15", "46,869.00", "10,029,189.70", 19, 11, "118,753.00"],
  ["Projectors & Screens", "25,930,529.45", "332,928.00", "15,004,189.40", "191,415.00", "40,934,718.85", 21, 12, "524,343.00"],
  ["Recording Pen", "1,716,749.90", "17,189.35", "1,031,775.35", "10,413.85", "2,748,525.25", 21, 12, "27,603.20"],
  ["Refrigerators", "23,510,362.69", "330,460.29", "15,083,838.40", "218,713.58", "38,594,201.08", 23, 15, "549,173.87"],
  ["Smart phones & PDAs", "9,393,966.95", "115,231.00", "5,333,879.45", "59,727.00", "14,727,846.40", 23, 13, "174,958.00"],
  ["Televisions", "12,323,403.81", "136,450.08", "7,038,580.37", "79,780.25", "19,361,984.17", 21, 12, "216,230.33"],
  ["Touch Screen Phones", "7,124,314.20", "74,614.00", "4,627,798.55", "50,605.00", "11,752,112.75", 22, 14, "125,219.00"],
  ["VCD & DVD", "1,318,570.79", "10,712.70", "717,259.05", "6,971.40", "2,035,829.83", 23, 12, "17,684.10"],
  ["Washers & Dryers", "24,291,310.28", "532,465.50", "12,993,545.54", "371,226.00", "37,284,855.81", 24, 12, "903,691.50"],
  ["Water Heaters", "8,880,474.10", "115,694.00", "5,124,820.23", "59,146.00", "14,005,294.33", 21, 12, "174,840.00"],
];
const TOTAL_BARS = [2, 1, 0, 10, 1, 17, 6, 21, 8, 21, 5, 1, 7, 15, 22, 1, 0, 5, 7, 4, 1, 12, 20, 17, 3, 12, 12, 3, 0, 1, 1, 6, 1, 9, 3, 15, 4, 1, 12, 3, 2, 10, 14, 1, 1, 4, 3, 1, 1, 10, 12, 4, 4, 7, 1, 3];

const DesignIcon = () => (
  <svg width="31" height="30" viewBox="0 0 31 30">
    <path d="M1 2v18h18zM5 11l5 5H5z" fill="#7f7f7f" fillRule="evenodd" /><path d="M27 0l4 3-16 17-5 2 1.500-5.500z" fill="#3f78b8" /><path d="M10 22l1-4 3 2z" fill="#a8c3e2" />
    <path d="M4.500 23.500h24v6h-24z" fill="#fff7ea" stroke="#e08a3a" /><path d="M8.500 24v2M12.500 24v2M16.500 24v2M20.500 24v2M24.500 24v2" stroke="#e08a3a" />
  </svg>
);
const ZoomIcon = () => (
  <svg width="27" height="28" viewBox="0 0 27 28"><circle cx="10" cy="11" r="8.800" fill="#fcfcfc" stroke="#858585" strokeWidth="2" /><path d="M16 18l9 8.500" stroke="#7a7a7a" strokeWidth="3.500" /></svg>
);
const EndIcon = ({ last }) => (
  <svg width="24" height="25" viewBox="0 0 24 25"><path d={last ? "M0 0l15 12.500L0 25zM16 0h8v25h-8z" : "M0 0h8v25H0zM24 0v25L9 12.500z"} fill="#b3b3b3" /></svg>
);
const StepIcon = ({ next }) => (
  <svg width="21" height="24" viewBox="0 0 21 24">
    <defs><linearGradient id="nav" x1="0" y1="0" x2="0" y2="1"><stop offset="0" stopColor="#a9c4f0" /><stop offset=".5" stopColor="#c3d6f7" /><stop offset="1" stopColor="#9bbaf0" /></linearGradient></defs>
    <path d={next ? "M.5.5l20 11.500-20 11.500z" : "M20.500.5L.5 12l20 11.500z"} fill="url(#nav)" stroke="#a3bce6" />
  </svg>
);
const RefreshIcon = () => (
  <svg width="14" height="15" viewBox="0 0 14 15"><path d="M1.500 6.500A5.500 5 0 0 1 11 3.500M12.500 8.500A5.500 5 0 0 1 3 11.500" fill="none" stroke="#5fa383" strokeWidth="2.500" /><path d="M13.500 0v6.500H7zM.5 15V8.500H7z" fill="#5fa383" /></svg>
);
const BackIcon = () => (
  <svg width="14" height="13" viewBox="0 0 14 13"><path d="M13.500 3v7H7v2.500L.5 6.500 7 .5V3z" fill="#bcd1f3" stroke="#7fa3dc" /></svg>
);
const PrinterIcon = () => (
  <svg width="28" height="26" viewBox="0 0 28 26"><path d="M7.500.500h11l3 3v8h-14z" fill="#fff" stroke="#7a7a7a" /><path d="M0 10h28v9H0z" fill="#6f6f6f" /><path d="M7 8h14v4H7z" fill="#3f78b8" /><path d="M7.500 15.500h13v10h-13z" fill="#fff" stroke="#7a7a7a" /><path d="M10 19h8M10 22h8" stroke="#3f78b8" strokeWidth="1.300" /></svg>
);
const PageSetupIcon = () => (
  <svg width="30" height="31" viewBox="0 0 30 31"><path d="M.5.500h14l6 6v21H.5z" fill="#fff" stroke="#7a7a7a" /><path d="M14.500.500v6h6M6 13h5M6 18h5M6 23h4" fill="none" stroke="#7a7a7a" /><circle cx="4" cy="13" r="1" fill="#777" /><circle cx="4" cy="18" r="1" fill="#777" /><circle cx="4" cy="23" r="1" fill="#777" /><path d="M13.500 12.500h9l2 2v6h-11z" fill="#fff" stroke="#7a7a7a" /><path d="M9 19h21v7H9z" fill="#6f6f6f" /><path d="M13 17h12v3H13z" fill="#3f78b8" /><path d="M13.500 22.500h11v8h-11z" fill="#fff" stroke="#7a7a7a" /><path d="M16 25.500h6M16 28h6" stroke="#3f78b8" /></svg>
);
const LayoutIcon = () => (
  <svg width="23" height="28" viewBox="0 0 23 28"><path d="M.6.600h21.800v26.800H.6z" fill="#fff" stroke="#7f7f7f" strokeWidth="1.200" /><path d="M4 6h15M4 10h15M4 14h15M4 18h15M4 22h15" stroke="#999" /></svg>
);
const ExportIcon = () => (
  <svg width="28" height="28" viewBox="0 0 28 28"><path d="M.6.600h18.800v20H.6z" fill="#fff" stroke="#888" /><path d="M0 0h20v4H0z" fill="#3f78b8" /><path d="M3 8h10M3 11h6M3 14h4" stroke="#999" /><path d="M8.600 9.600h18.800v17.800H8.600z" fill="#fff" stroke="#888" /><path d="M8 9h20v4H8z" fill="#3f78b8" /><path d="M20 17h5M21 20h4M20 23h5" stroke="#999" /><path d="M5 15c0 4 3 6 7 6v-5l7 6.500-7 5V24c-6 0-9-3-9-9z" fill="#3f78b8" /></svg>
);
const MapIcon = () => (
  <svg width="16" height="14" viewBox="0 0 16 14"><path d="M.5.500h15v13H.5z" fill="#fff" stroke="#777" /><path d="M7 0v14" stroke="#777" strokeWidth="1.500" /><path d="M2 4h3M2 7h3M2 10h3" stroke="#777" /><path d="M8.500 2h6v10h-6z" fill="#ddd" /></svg>
);
const ParamIcon = () => (
  <svg width="16" height="16" viewBox="0 0 16 16"><path d="M.5.500h12v13H.5z" fill="#fff" stroke="#777" /><path d="M0 0h13v4H0z" fill="#3f78b8" /><path d="M2 7h4M2 10h4" stroke="#777" /><circle cx="11" cy="11.500" r="4" fill="#f4f4f4" stroke="#777" /><circle cx="11" cy="11.500" r="1.500" fill="none" stroke="#777" /></svg>
);
const Binoculars = () => (
  <svg width="16" height="14" viewBox="0 0 16 14"><path d="M2.500 0h3v2h1v3h3V2h1V0h3v2l2.500 6v6h-5.500V8h-3v6H0V8l2.500-6z" fill="#b4b4b4" /><path d="M1.500 9v4M14.500 9v4" stroke="#f4f4f4" /></svg>
);

function Viewer() {
  return (
    <>
      <TabBar $h={31}>
        <Tab $w={42} $kind="file"><Fit w={16}>File</Fit></Tab>
        <Tab $w={48} $gap={9} $kind="on"><Fit w={19}>Run</Fit></Tab>
      </TabBar>
      <Ribbon>
        <Group $w={50}>
          <GroupBody $pad="7px 0 0 0">
            <BigButton $w={48}><IconBox $h={33}><DesignIcon /></IconBox><TextLine><Fit w={35}>Design</Fit></TextLine></BigButton>
          </GroupBody>
          <GroupLabel $shift={6}><Fit w={29.500}>Views</Fit></GroupLabel>
        </Group>
        <Group $w={52}>
          <GroupBody $pad="7px 0 0 2px">
            <BigButton $w={50}><IconBox $h={33}><ZoomIcon /></IconBox><TextLine><Fit w={29}>Zoom</Fit></TextLine><TextLine><Drop /></TextLine></BigButton>
          </GroupBody>
          <GroupLabel><Fit w={28.500}>Zoom</Fit></GroupLabel>
        </Group>
        <Group $w={371}>
          <GroupBody $pad="7px 0 0 15px">
            <BigButton $w={28}><IconBox $h={33}><EndIcon /></IconBox><TextLine><Fit w={23} color="#777">First</Fit></TextLine></BigButton>
            <BigButton $w={50} $ml={9}><IconBox $h={33}><StepIcon /></IconBox><TextLine><Fit w={43} color="#777">Previous</Fit></TextLine></BigButton>
            <NavBox><PageInput $w={50}><Fit w={6}>1</Fit></PageInput><Fit w={24} color="#333">of  1</Fit></NavBox>
            <BigButton $w={40} $ml={1}><IconBox $h={33}><StepIcon next /></IconBox><TextLine><Fit w={23} color="#777">Next</Fit></TextLine></BigButton>
            <BigButton $w={40} $ml={2}><IconBox $h={33}><EndIcon last /></IconBox><TextLine><Fit w={22} color="#777">Last</Fit></TextLine></BigButton>
            <SmallStack $ml={14} $mt={-3} $gap={3}>
              <SmallItem><RefreshIcon /><Fit w={39} color="#777">Refresh</Fit></SmallItem>
              <SmallItem><XIcon s={14} c="#e2887c" w={3} /><Fit w={24} color="#777">Stop</Fit></SmallItem>
              <SmallItem><BackIcon /><Fit w={24} color="#777">Back</Fit></SmallItem>
            </SmallStack>
          </GroupBody>
          <GroupLabel><Fit w={56}>Navigation</Fit></GroupLabel>
        </Group>
        <Group $w={140}>
          <GroupBody $pad="7px 0 0 8px">
            <BigButton $w={42}><IconBox $h={33}><PrinterIcon /></IconBox><TextLine><Fit w={23}>Print</Fit></TextLine></BigButton>
            <BigButton $w={42}><IconBox $h={33}><PageSetupIcon /></IconBox><TextLine><Fit w={26}>Page</Fit></TextLine><TextLine><Fit w={29}>Setup</Fit></TextLine></BigButton>
            <BigButton $w={44}><IconBox $h={33}><LayoutIcon /></IconBox><TextLine><Fit w={23}>Print</Fit></TextLine><TextLine><Fit w={35}>Layout</Fit></TextLine></BigButton>
          </GroupBody>
          <GroupLabel><Fit w={23}>Print</Fit></GroupLabel>
        </Group>
        <Group $w={57}>
          <GroupBody $pad="7px 0 0 6px">
            <BigButton $w={50}><IconBox $h={33}><ExportIcon /></IconBox><TextLine><Fit w={33}>Export</Fit></TextLine><TextLine><Drop /></TextLine></BigButton>
          </GroupBody>
          <GroupLabel><Fit w={33}>Export</Fit></GroupLabel>
        </Group>
        <Group $w={119}>
          <GroupBody $pad="4px 0 0 11px">
            <SmallStack $ml={0} $gap={6}>
              <SmallItem><MapIcon /><Fit w={75} color="#777">Document Map</Fit></SmallItem>
              <SmallItem $on $w="85px"><ParamIcon /><Fit w={56}>Parameters</Fit></SmallItem>
            </SmallStack>
          </GroupBody>
          <GroupLabel><Fit w={39}>Options</Fit></GroupLabel>
        </Group>
        <Group $w={116}>
          <GroupBody $pad="17px 0 0 10px">
            <FindRow><PageInput $w={80} $h={21} /><Binoculars /></FindRow>
          </GroupBody>
          <GroupLabel><Fit w={22}>Find</Fit></GroupLabel>
        </Group>
      </Ribbon>
      <ViewerBody>
        <Params>
          <ParamLabel><Fit w={121}>Product Category Name</Fit></ParamLabel>
          <Select><Fit w={61}>All Products</Fit><Chevron /></Select>
        </Params>
        <CollapseStrip>
          <svg width="35" height="6" viewBox="0 0 35 6"><path d="M0 0h35v6H0z" fill="#a9a9a9" /><path d="M14.500 5l3-4 3 4z" fill="#fff" /></svg>
        </CollapseStrip>
        <Report>
          <TopSliver>
            <Gap /><Gap /><Gap /><Gap /><Gap /><Gap /><Gap />
            <BarCell $h={3}><Bar style={{ height: 3 }} /><Bar style={{ height: 3 }} /></BarCell>
          </TopSliver>
          {ROWS.map(([name, a, b, c, d, e, h1, h2, f]) => (
            <ReportRow key={name}>
              <Name>{name}</Name>
              <Amount>${a}</Amount><Amount>${b}</Amount><Amount>${c}</Amount><Amount>${d}</Amount>
              <Amount $bold>${e}</Amount>
              <BarCell><Bar style={{ height: h1 }} /><Bar style={{ height: h2 }} /></BarCell>
              <Amount $bold>${f}</Amount>
            </ReportRow>
          ))}
          <ReportRow>
            <Name $bold>Total</Name>
            <Amount $bold>$339,458,077.24</Amount><Amount $bold>$4,035,603.33</Amount><Amount $bold>$193,960,348.98</Amount><Amount $bold>$2,403,345.65</Amount>
            <Amount $bold>$533,418,426.22</Amount>
            <BarCell>
              <svg width="89" height="22" viewBox="0 0 89 22">
                {TOTAL_BARS.map((h, i) => <rect key={i} x={i * 1.590} y={22 - h} width="1.500" height={h} fill={TEAL} />)}
              </svg>
            </BarCell>
            <Amount $bold>$6,438,948.98</Amount>
          </ReportRow>
          <RunDate><Fit w={121} size={13}>6/3/2020 9:02:01 AM</Fit></RunDate>
        </Report>
        <StatusBar>
          <svg width="12" height="14" viewBox="0 0 12 14"><path d="M1 0h6v5H1zM0 8h6M0 11h3" fill="none" stroke="#ddd" strokeWidth="1.300" /><path d="M4 13c0-6 7-6 7 0" fill="none" stroke="#ddd" strokeWidth="1.300" /></svg>
          <Fit w={128} size={13}>No current report server.</Fit>
        </StatusBar>
      </ViewerBody>
    </>
  );
}

export default function App() {
  return (
    <Viewport>
      <Global />
      <Board>
        <FirstStep>
          <Frame $w={1328} $h={451}>
            <Clip><Shifted><Designer /></Shifted></Clip>
            <Tooltip>
              <Fit w={44} weight={600}>Run (F5)</Fit>
              <TooltipBody><Fit w={212}>Run the report to see the rendered report.</Fit></TooltipBody>
            </Tooltip>
            <Mark $x={3} $y={28} $w={52} $h={83} />
            <Note $x={162} $y={210}><Fit w={551} size={20} color={RED}>Now Please Click the Button "Run" of the red-marked area !</Fit></Note>
          </Frame>
          <FirstArrow width="320" height="124" viewBox="1170 524 320 124">
            <path d="M1175.300 558.500h154v-29l155 57-155 57v-29h-154z" fill="none" stroke={RED} strokeWidth="5" strokeLinejoin="round" />
          </FirstArrow>
        </FirstStep>
        <SecondStep>
          <Frame $w={1446} $h={879}>
            <Clip><Viewer /></Clip>
            <Mark $x={-7} $y={33} $w={64} $h={67} />
            <Note $x={328} $y={137}><Fit w={368} size={20} color={RED}>Finally please click the Button "Design" !</Fit></Note>
          </Frame>
        </SecondStep>
        <SecondArrow width="168" height="94" viewBox="3019 620 168 94">
          <path d="M3021.700 646.300h80.600v-21l82 42-82 42.400v-21h-80.600z" fill="none" stroke={RED} strokeWidth="4.800" strokeLinejoin="round" />
        </SecondArrow>
        <ThirdStep>
          <Frame $w={1603} $h={680}>
            <Clip>
              <TitleStrip><TitleSpeck $w={11} $c="#b9a0d8" /><TitleSpeck $w={4} $c="#4a7db5" /></TitleStrip>
              <Shifted $x={5}><Designer active /></Shifted>
            </Clip>
            <Note $x={727} $y={32}><Fit w={771} size={20} color={RED}>First please click the title "Sales Return Amount" by using the mouse's right button !</Fit></Note>
            <Note $x={724} $y={73}><Fit w={755} size={20} color={RED}>And then click the Icon "Insert Column {"> >"} Right " of the following popup-menu !</Fit></Note>
            <Mark $x={1111} $y={263} $w={189} $h={29} />
            <Menu $x={1298} $y={282} $w={180}>
              <MenuHead><Bold w={50} size={12.500}>Text Box</Bold></MenuHead>
              <Item icon={<CutIcon on />} label="Cut" w={18} />
              <Item icon={<CopyIcon on />} label="Copy" w={26} />
              <Item icon={<PasteIcon s={0.5} />} label="Paste" w={27} off />
              <Item icon={<XIcon s={15} w={1.800} />} label="Delete" w={33} />
              <MenuRule />
              <Item label="Select" w={30} sub />
              <MenuRule />
              <Item icon={<Fx>fx</Fx>} label="Expression..." w={64} />
              <Item icon={<PropsIcon />} label="Text Box Properties..." w={105} />
              <MenuHead><Bold w={32} size={12.500}>Tablix</Bold></MenuHead>
              <Item label="Insert Column" w={72} sub on />
              <Item label="Insert Row" w={55} sub />
              <Item label="Delete Columns" w={81} />
              <Item label="Delete Rows" w={64} />
              <MenuRule />
              <Item label="Add Group" w={57} sub />
              <MenuRule />
              <Item label="Insert" w={29} sub />
            </Menu>
            <Menu $x={1477} $y={496} $w={103}>
              <Item label="Left" w={19} />
              <Item label="Right" w={28} on />
            </Menu>
            <Mark $x={1325} $y={495} $w={108} $h={26} />
            <Mark $x={1491} $y={518} $w={72} $h={31} />
          </Frame>
        </ThirdStep>
      </Board>
    </Viewport>
  );
}
